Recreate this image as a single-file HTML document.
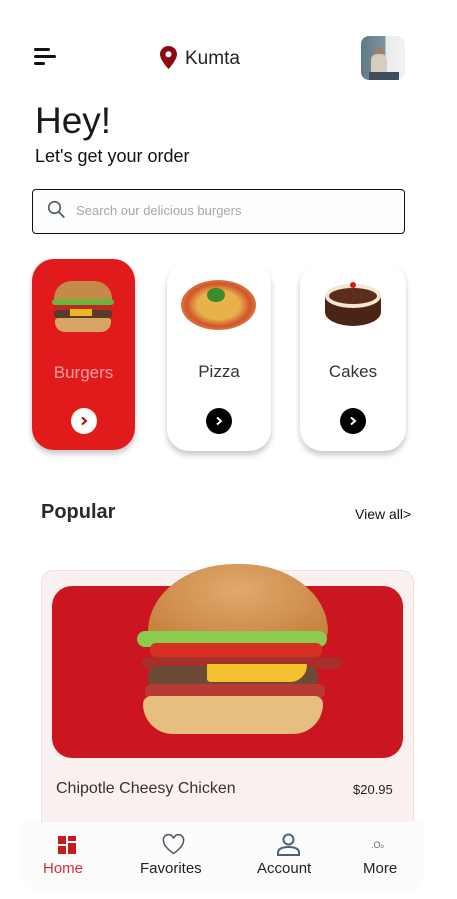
<!DOCTYPE html>
<html><head><meta charset="utf-8"><style>
*{margin:0;padding:0;box-sizing:border-box}
body{width:457px;height:899px;background:#fff;font-family:"Liberation Sans",sans-serif;position:relative;overflow:hidden;color:#1a1a1a}
.a{position:absolute}
.card{position:absolute;border-radius:22px;box-shadow:0 4px 6px rgba(0,0,0,.22)}
.btn{position:absolute;width:26px;height:26px;border-radius:50%;left:50%;margin-left:-13px;top:149px;display:flex;align-items:center;justify-content:center}
.lbl{position:absolute;width:100%;text-align:center;font-size:17px}
.nav{position:absolute;text-align:center;font-size:15px;top:860px}
</style></head><body>
<!-- menu -->
<div class="a" style="left:34px;top:48px;width:16px;height:2.5px;background:#111;border-radius:2px"></div>
<div class="a" style="left:34px;top:55px;width:22px;height:2.5px;background:#111;border-radius:2px"></div>
<div class="a" style="left:34px;top:62px;width:11px;height:2.5px;background:#111;border-radius:2px"></div>
<svg class="a" style="left:160px;top:46px" width="17" height="23" viewBox="0 0 17 23"><path d="M8.5 0C3.8 0 0 3.6 0 8.2 0 14 8.5 23 8.5 23S17 14 17 8.2C17 3.6 13.2 0 8.5 0z" fill="#8b0a0f"/><circle cx="8.5" cy="8.2" r="3" fill="#fff"/></svg>
<div class="a" style="left:185px;top:48px;font-size:19px;color:#222">Kumta</div>
<div class="a" style="left:361px;top:36px;width:44px;height:44px;border-radius:8px;overflow:hidden;background:linear-gradient(90deg,#5f7a85 0,#7d949c 55%,#e8ecee 56%,#f2f2f0 100%)">
<div class="a" style="left:14px;top:10px;width:8px;height:9px;border-radius:50%;background:#a0806a"></div>
<div class="a" style="left:10px;top:18px;width:16px;height:20px;border-radius:6px 6px 2px 2px;background:#d8ccbf"></div>
<div class="a" style="left:8px;top:36px;width:30px;height:8px;background:#3f4d5a"></div></div>
<div class="a" style="left:35px;top:100px;font-size:37px;color:#1a1a1a">Hey!</div>
<div class="a" style="left:35px;top:146px;font-size:18px;color:#111">Let's get your order</div>
<div class="a" style="left:32px;top:189px;width:373px;height:45px;border:1.3px solid #111;border-radius:4px;background:#fdfdfd"></div>
<svg class="a" style="left:47px;top:200px" width="19" height="20" viewBox="0 0 19 20"><circle cx="7.5" cy="7.5" r="5.8" fill="none" stroke="#4d5a66" stroke-width="1.6"/><path d="M11.8 12l5 5" stroke="#4d5a66" stroke-width="1.8" stroke-linecap="round"/></svg>
<div class="a" style="left:76px;top:203px;font-size:13px;color:#a4a7ab">Search our delicious burgers</div>

<!-- cards -->
<div class="card" style="left:32px;top:259px;width:103px;height:191px;background:#e11a1c">
<div class="a" style="left:22px;top:22px;width:58px;height:20px;border-radius:29px 29px 4px 4px;background:#c58a4a"></div>
<div class="a" style="left:20px;top:40px;width:62px;height:6px;background:#6fb43a;border-radius:3px"></div>
<div class="a" style="left:22px;top:46px;width:58px;height:5px;background:#b52d22"></div>
<div class="a" style="left:22px;top:51px;width:58px;height:8px;background:#5a3a28;border-radius:3px"></div>
<div class="a" style="left:38px;top:50px;width:22px;height:7px;background:#f2b41f"></div>
<div class="a" style="left:23px;top:59px;width:56px;height:14px;background:#d9a566;border-radius:3px 3px 10px 10px"></div>
<div class="lbl" style="top:104px;color:#f6a0a0">Burgers</div>
<div class="btn" style="background:#fff"><svg width="10" height="10" viewBox="0 0 10 10"><path d="M3 1.5l4 3.5-4 3.5" fill="none" stroke="#a10d12" stroke-width="2"/></svg></div></div>
<div class="card" style="left:167px;top:262px;width:104px;height:189px;background:#fff">
<div class="a" style="left:14px;top:18px;width:75px;height:50px;border-radius:50%;background:radial-gradient(#e7b24a 40%,#d3532b 60%,#d89a52 80%)"></div>
<div class="a" style="left:40px;top:26px;width:18px;height:14px;border-radius:50%;background:#3f8a2e"></div>
<div class="lbl" style="top:100px;color:#333">Pizza</div>
<div class="btn" style="background:#000;top:146px"><svg width="10" height="10" viewBox="0 0 10 10"><path d="M3 1.5l4 3.5-4 3.5" fill="none" stroke="#fff" stroke-width="2"/></svg></div></div>
<div class="card" style="left:300px;top:262px;width:106px;height:189px;background:#fff">
<div class="a" style="left:25px;top:34px;width:56px;height:30px;border-radius:0 0 28px 28px/0 0 14px 14px;background:#4a2415"></div>
<div class="a" style="left:25px;top:22px;width:56px;height:24px;border-radius:50%;background:#5a2e1c;border:4px solid #f3e6d2"></div>
<div class="a" style="left:50px;top:20px;width:6px;height:6px;border-radius:50%;background:#e0141a"></div>
<div class="lbl" style="top:100px;color:#333">Cakes</div>
<div class="btn" style="background:#000;top:146px"><svg width="10" height="10" viewBox="0 0 10 10"><path d="M3 1.5l4 3.5-4 3.5" fill="none" stroke="#fff" stroke-width="2"/></svg></div></div>

<div class="a" style="left:41px;top:501px;font-size:20px;font-weight:bold;color:#2a2a2a">Popular</div>
<div class="a" style="left:355px;top:506px;font-size:14px;color:#111">View all&gt;</div>

<div class="a" style="left:41px;top:570px;width:373px;height:280px;background:#f9f0ef;border-radius:12px;border:1px solid #e8e2e2">
<div class="a" style="left:10px;top:15px;width:351px;height:172px;background:#cb1520;border-radius:20px"></div>
<div class="a" style="left:106px;top:-7px;width:180px;height:75px;border-radius:90px 90px 8px 8px/70px 70px 8px 8px;background:radial-gradient(ellipse at 50% 35%,#e0aa6c,#c47c3a)"></div>
<div class="a" style="left:95px;top:60px;width:190px;height:16px;background:#8ccb4e;border-radius:8px"></div>
<div class="a" style="left:108px;top:72px;width:172px;height:14px;background:#d63020;border-radius:6px"></div>
<div class="a" style="left:100px;top:86px;width:200px;height:12px;background:#a8302a;border-radius:6px"></div>
<div class="a" style="left:106px;top:95px;width:170px;height:22px;background:#6b4a36;border-radius:10px"></div>
<div class="a" style="left:165px;top:93px;width:100px;height:18px;background:#f4c030;border-radius:2px 2px 30px 6px"></div>
<div class="a" style="left:103px;top:113px;width:180px;height:14px;background:#b83a34;border-radius:6px"></div>
<div class="a" style="left:101px;top:125px;width:180px;height:38px;background:#e6be80;border-radius:8px 8px 30px 30px"></div>
<div class="a" style="left:14px;top:209px;font-size:16px;color:#333">Chipotle Cheesy Chicken</div>
<div class="a" style="left:311px;top:211px;font-size:13px;color:#222">$20.95</div></div>

<div class="a" style="left:20px;top:822px;width:405px;height:70px;background:#fcfcfc;border-radius:0 0 22px 22px"></div>
<svg class="a" style="left:58px;top:836px" width="18" height="18" viewBox="0 0 18 18" fill="#c41a23"><rect x="0" y="0" width="8" height="8"/><rect x="10" y="0" width="8" height="5"/><rect x="0" y="10" width="8" height="8"/><rect x="10" y="7" width="8" height="11"/></svg>
<svg class="a" style="left:162px;top:834px" width="23" height="21" viewBox="0 0 23 21"><path d="M11.5 19.5S1.5 13 1.5 7A5 5 0 0 1 11.5 4.5 5 5 0 0 1 21.5 7c0 6-10 12.5-10 12.5z" fill="none" stroke="#4d5560" stroke-width="1.5"/></svg>
<svg class="a" style="left:276px;top:833px" width="25" height="24" viewBox="0 0 25 24"><circle cx="12.5" cy="6.5" r="5" fill="none" stroke="#4a6272" stroke-width="2"/><path d="M2 22v-2c0-4 4-6 10.5-6S23 16 23 20v2z" fill="none" stroke="#4a6272" stroke-width="2"/></svg>
<div class="a" style="left:371px;top:840px;font-size:9px;color:#666">.O<span style="font-size:6px">o</span></div>
<div class="nav" style="left:43px;color:#d23038">Home</div>
<div class="nav" style="left:140px;color:#222">Favorites</div>
<div class="nav" style="left:257px;color:#222">Account</div>
<div class="nav" style="left:363px;color:#222">More</div>
</body></html>
